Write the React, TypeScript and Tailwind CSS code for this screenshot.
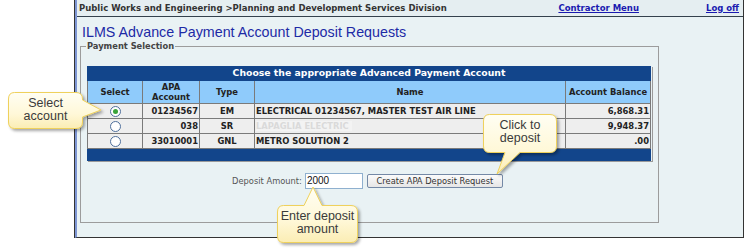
import React from "react";

const V = { fontFamily: '"DejaVu Sans", Verdana, sans-serif' };
const A = { fontFamily: '"Liberation Sans", Arial, sans-serif' };

function Radio({ checked }: { checked?: boolean }) {
  return (
    <span className="inline-flex w-[11px] h-[11px] rounded-full border border-[#4f6f9c] bg-white items-center justify-center align-middle">
      {checked && <span className="w-[5px] h-[5px] rounded-full bg-[#3aa33a]" />}
    </span>
  );
}

const rows = [
  { sel: true, acct: "01234567", type: "EM", name: "ELECTRICAL 01234567, MASTER TEST AIR LINE", bal: "6,868.31" },
  { sel: false, acct: "038", type: "SR", name: "LAPAGLIA ELECTRIC", faded: true, bal: "9,948.37" },
  { sel: false, acct: "33010001", type: "GNL", name: "METRO SOLUTION 2", bal: ".00" },
];

export default function App() {
  return (
    <div className="relative w-[744px] h-[252px] bg-white overflow-hidden" style={V}>
      <div className="ml-[74px] h-[238px] border-l border-l-[#333] flex">
        <div className="flex-1 border-l-2 border-l-[#7d95d3] border-r border-r-[#333] border-b border-b-[#333] bg-[#e9f2f4] flex flex-col">
          {/* header bar */}
          <div className="h-[17px] bg-[#e5eef1] border-b border-b-[#34414d] flex items-center pl-[2px] pr-[4px] text-[8.5px] font-bold text-[#333]">
            <span className="flex-1">Public Works and Engineering &gt;Planning and Development Services Division</span>
            <span className="text-[#1a1ab0] underline mr-[67px]">Contractor Menu</span>
            <span className="text-[#1a1ab0] underline">Log off</span>
          </div>
          {/* title */}
          <div className="pl-[5px] mt-[6px] text-[14.3px] leading-[18px] text-[#1d2aa6]" style={A}>
            ILMS Advance Payment Account Deposit Requests
          </div>
          {/* fieldset */}
          <fieldset className="ml-[3px] w-[577px] h-[182px] border border-[#9c9c9c] px-[6px] pt-[15px] mt-[0px]">
            <legend className="text-[8.3px] font-bold text-[#444] px-[1px] ml-[-1px] leading-[10px]">Payment Selection</legend>
            <div className="w-[565px] shadow-[1px_1px_0_#9a9a9a]">
              <table className="w-[564px] border-collapse text-[8.4px] font-bold text-[#222]">
                <thead>
                  <tr className="bg-[#12458b]">
                    <th colSpan={5} className="h-[14px] text-white text-[9.3px] font-bold border border-[#12458b] leading-[12px] pb-[1px]">
                      Choose the appropriate Advanced Payment Account
                    </th>
                  </tr>
                  <tr className="bg-[#8fcbfb] h-[23px]">
                    <th className="w-[55px] border border-[#7a7a7a] leading-[10px]">Select</th>
                    <th className="w-[57px] border border-[#7a7a7a] leading-[10px]">APA<br />Account</th>
                    <th className="w-[55px] border border-[#7a7a7a] leading-[10px]">Type</th>
                    <th className="w-[311px] border border-[#7a7a7a] leading-[10px]">Name</th>
                    <th className="border border-[#7a7a7a] leading-[10px] whitespace-nowrap">Account Balance</th>
                  </tr>
                </thead>
                <tbody>
                  {rows.map((r, i) => (
                    <tr key={i} className="bg-[#eeeeee] h-[15px]">
                      <td className="border border-[#7a7a7a] text-center leading-[10px]"><Radio checked={r.sel} /></td>
                      <td className="border border-[#7a7a7a] text-right pr-[1px] leading-[10px]">{r.acct}</td>
                      <td className="border border-[#7a7a7a] text-center leading-[10px]">{r.type}</td>
                      <td className="border border-[#7a7a7a] text-left pl-[1px] leading-[10px]">
                        {r.faded ? <span className="bg-[#f3f3f3] text-[#dadada] pr-[3px]">{r.name}</span> : r.name}
                      </td>
                      <td className="border border-[#7a7a7a] text-right pr-[1px] leading-[10px]">{r.bal}</td>
                    </tr>
                  ))}
                  <tr className="bg-[#12458b] h-[12px]">
                    <td colSpan={5} className="border border-[#12458b]" />
                  </tr>
                </tbody>
              </table>
            </div>
            <div className="flex justify-center items-center mt-[12px] pr-[4px]">
              <span className="text-[8.3px] text-[#555] mr-[3px]">Deposit Amount:</span>
              <div className="w-[58px] h-[16px] border border-[#8fb0cf] bg-white text-[10px] leading-[14px] pl-[1px] text-[#111]" style={A}>2000</div>
              <button className="ml-[4px] h-[14px] w-[136px] border border-[#7489a6] rounded-[2px] bg-gradient-to-b from-[#fbfbfb] to-[#e6e6e6] text-[8.3px] leading-[12px] text-[#333]" style={V}>
                Create APA Deposit Request
              </button>
            </div>
          </fieldset>
        </div>
      </div>

      {/* callouts */}
      <svg className="absolute inset-0 pointer-events-none" width="744" height="252" viewBox="0 0 744 252">
        <defs>
          <linearGradient id="cg" x1="0" y1="0" x2="0" y2="1">
            <stop offset="0" stopColor="#fffef3" />
            <stop offset="0.6" stopColor="#fff8d8" />
            <stop offset="1" stopColor="#fbedb4" />
          </linearGradient>
          <filter id="sh" x="-20%" y="-20%" width="150%" height="150%">
            <feGaussianBlur in="SourceAlpha" stdDeviation="1.5" />
            <feOffset dx="2" dy="2" result="b" />
            <feComponentTransfer><feFuncA type="linear" slope="0.35" /></feComponentTransfer>
            <feMerge><feMergeNode /><feMergeNode in="SourceGraphic" /></feMerge>
          </filter>
        </defs>
        <g filter="url(#sh)" fill="url(#cg)" stroke="#efd15b" strokeWidth="1">
          <path d="M14.5,92.5 H76 Q82.5,92.5 82.5,99 V100 L101,110 L82.5,117 V122 Q82.5,128.5 76,128.5 H14.5 Q8.5,128.5 8.5,122 V99 Q8.5,92.5 14.5,92.5 Z" />
          <path d="M489.5,114.5 H550 Q556.5,114.5 556.5,121 V146 Q556.5,152.5 550,152.5 H520 L497,174 L505,152.5 H489.5 Q483.5,152.5 483.5,146 V121 Q483.5,114.5 489.5,114.5 Z" />
          <path d="M283.5,205.5 H304 L313,187 L322,205.5 H351 Q357.5,205.5 357.5,212 V236 Q357.5,242.5 351,242.5 H283.5 Q277.5,242.5 277.5,236 V212 Q277.5,205.5 283.5,205.5 Z" />
        </g>
      </svg>
      <div className="absolute left-[8px] top-[97px] w-[75px] text-center text-[12.5px] leading-[13px] text-[#3a3a3a]" style={A}>Select<br />account</div>
      <div className="absolute left-[483px] top-[119px] w-[74px] text-center text-[12.5px] leading-[12.5px] text-[#3a3a3a]" style={A}>Click to<br />deposit</div>
      <div className="absolute left-[277px] top-[210px] w-[81px] text-center text-[12.5px] leading-[12.5px] text-[#3a3a3a]" style={A}>Enter deposit<br />amount</div>
    </div>
  );
}
